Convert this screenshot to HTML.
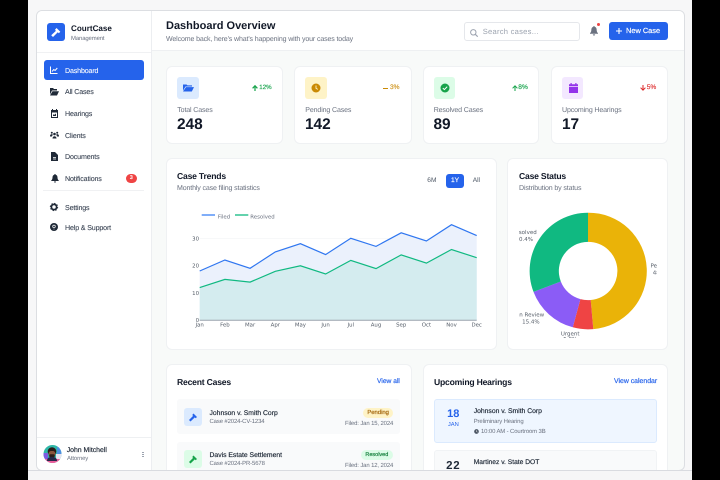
<!DOCTYPE html>
<html><head><meta charset="utf-8"><style>
html,body{margin:0;padding:0;width:720px;height:480px;overflow:hidden;background:#000}
*{box-sizing:border-box}
#r{position:absolute;left:0;top:0;width:720px;height:480px;overflow:hidden;background:#000;filter:blur(.28px);text-rendering:geometricPrecision}
#p{position:absolute;left:28px;top:0;width:664px;height:480px;background:#f7f7f8}
#f{position:absolute;left:36px;top:10px;width:649px;height:461px;background:#f8faf9;border:1px solid #dcdee2;border-radius:6px;overflow:hidden}
.a{position:absolute;white-space:nowrap;font-family:"Liberation Sans",sans-serif;line-height:12px;margin-top:.7px}
.b{position:absolute}
.c{position:absolute;background:#fff;border:1px solid #eff1f3;border-radius:6px}
.m{-webkit-text-stroke:.18px currentColor}
.nav{font-size:7.1px;letter-spacing:-.15px;color:#374151;left:65px;-webkit-text-stroke:.08px currentColor}
.h{font-size:8.600px;letter-spacing:-.2px;font-weight:bold;color:#111827}
.g{color:#6b7280}
.s{font-size:5.95px!important;letter-spacing:-.12px}
.lab{font-size:7.05px;letter-spacing:-.14px;color:#6b7280}
.num{font-size:15.4px;font-weight:bold;color:#111827;margin-top:0}
svg{position:absolute;overflow:visible}
svg text{font-family:"DejaVu Sans",sans-serif}
</style></head><body><div id="r">
<div id="p"></div>
<div id="f"></div>

<!-- sidebar -->
<div class="b" style="left:37px;top:11px;width:115px;height:459px;background:#fff;border-right:1px solid #eceef1;border-radius:5px 0 0 5px"></div>
<div class="b" style="left:37px;top:52px;width:114px;height:1px;background:#f0f1f3"></div>
<div class="b" style="left:47px;top:23px;width:18px;height:18px;border-radius:3px;background:#2563eb"></div>
<svg style="left:47px;top:23px" width="18" height="18" viewBox="0 0 18 18"><path d="M9.500 5l3.800 3.800-1.500 1.500-1-1L6 14 4.200 12.300 8.900 7.900l-.9-1.100z" fill="#fff"/></svg>
<div class="a" style="left:71px;top:22px;font-size:8.100px;font-weight:bold;color:#111827">CourtCase</div>
<div class="a s" style="left:71px;top:32px;color:#6b7280">Management</div>

<div class="b" style="left:43.500px;top:60.300px;width:100px;height:19.500px;border-radius:3px;background:#2563eb"></div>
<svg style="left:50px;top:66px" width="8" height="8" viewBox="0 0 8 8"><path d="M.5.500V7.500H7.500M2 5.500l1.800-2 1.300 1L7.300 2" fill="none" stroke="#fff" stroke-width="1"/></svg>
<div class="a nav" style="top:64px;color:#fff">Dashboard</div>
<svg style="left:50px;top:88px" width="9" height="8" viewBox="0 0 9 8"><path d="M0 0h3l1 1h3v1.500H2L0 6.500zM2.500 3.300H9L7 7.500H0z" fill="#1f2937"/></svg>
<div class="a nav" style="top:85.700px">All Cases</div>
<svg style="left:50.500px;top:109px" width="7" height="9" viewBox="0 0 7 9"><path d="M1 0h1v1h3V0h1v1h1v8H0V1h1zM1 3.500V8h5V3.500z" fill="#1f2937"/><path d="M2 5l1 1 2-1.500V7H2z" fill="#1f2937"/></svg>
<div class="a nav" style="top:107.300px">Hearings</div>
<svg style="left:50px;top:131px" width="9" height="8" viewBox="0 0 9 8" fill="#1f2937"><circle cx="4.500" cy="3" r="1.300"/><circle cx="1.800" cy="1.700" r="1"/><circle cx="7.200" cy="1.700" r="1"/><path d="M2.500 7.500c0-3 4-3 4 0zM0 5c0-2 2.200-2.200 2.800-1.500L2 5.500H0zM9 5c0-2-2.200-2.200-2.800-1.500L7 5.500h2z"/></svg>
<div class="a nav" style="top:129px">Clients</div>
<svg style="left:51px;top:152px" width="7" height="9" viewBox="0 0 7 9"><path d="M0 0h4l3 3v6H0z" fill="#1f2937"/><path d="M2 5h3v.8H2zM2 6.600h3v.8H2z" fill="#fff"/></svg>
<div class="a nav" style="top:150.700px">Documents</div>
<svg style="left:50.500px;top:174px" width="8" height="9" viewBox="0 0 8 9"><path d="M4 0c.5 0 .6.300.6.700C6 1 6.500 2.200 6.500 3.500c0 1.500.5 2.300 1.300 3V7H.2v-.5C1 5.800 1.500 5 1.500 3.500 1.500 2.200 2 1 3.400.7 3.400.3 3.500 0 4 0zM3 7.500h2C5 9 3 9 3 7.500z" fill="#1f2937"/></svg>
<div class="a nav" style="top:172.300px">Notifications</div>
<div class="b" style="left:126px;top:173.800px;width:10.700px;height:9px;border-radius:4.500px;background:#ef4444"></div>
<div class="a" style="left:126px;top:171.800px;width:10.700px;text-align:center;font-size:5.600px;font-weight:bold;color:#fff">3</div>
<div class="b" style="left:43px;top:190px;width:101px;height:1px;background:#f0f1f3"></div>
<svg style="left:50px;top:203px" width="8" height="8" viewBox="0 0 8 8"><circle cx="4" cy="4" r="2.600" fill="none" stroke="#1f2937" stroke-width="1.700"/><circle cx="4" cy="4" r="3.700" fill="none" stroke="#1f2937" stroke-width=".9" stroke-dasharray="1.500 1.400"/></svg>
<div class="a nav" style="top:201.300px">Settings</div>
<svg style="left:50px;top:223px" width="8" height="8" viewBox="0 0 8 8"><circle cx="4" cy="4" r="4" fill="#1f2937"/><circle cx="4" cy="3.400" r="1.300" fill="none" stroke="#fff" stroke-width=".7"/><rect x="3.600" y="5.600" width=".8" height=".8" fill="#fff"/></svg>
<div class="a nav" style="top:221.300px">Help &amp; Support</div>

<div class="b" style="left:37px;top:437px;width:114px;height:1px;background:#eef0f2"></div>
<svg style="left:43px;top:445px" width="19" height="19" viewBox="0 0 19 19"><defs><clipPath id="av"><circle cx="9.500" cy="9" r="9"/></clipPath></defs><g clip-path="url(#av)"><rect width="19" height="19" fill="#2fb7a8"/><rect x="0" y="8" width="5" height="8" fill="#7b5be0"/><rect x="14" y="2" width="5" height="7" fill="#4d8fe0"/><rect x="0" y="14" width="19" height="5" fill="#ee5c9c"/><rect x="13" y="9" width="6" height="5" fill="#e8e2f0"/><circle cx="9" cy="6.500" r="4.300" fill="#2a1b18"/><rect x="5.700" y="6" width="6.600" height="6" rx="2.500" fill="#8a543c"/><rect x="6.300" y="9.300" width="5.400" height="3.200" rx="1" fill="#2b1d1a"/><path d="M4 16c0-3 2-4 5-4s5 1 5 4z" fill="#26284a"/></g></svg>
<div class="a m" style="left:66.700px;top:444px;font-size:6.900px;color:#1f2937">John Mitchell</div>
<div class="a g s" style="left:67px;top:452.500px">Attorney</div>
<div class="b" style="left:142px;top:451.500px;width:1.500px;height:1.500px;background:#9ca3af"></div>
<div class="b" style="left:142px;top:453.500px;width:1.500px;height:1.500px;background:#9ca3af"></div>
<div class="b" style="left:142px;top:455.500px;width:1.500px;height:1.500px;background:#9ca3af"></div>

<!-- header -->
<div class="b" style="left:152px;top:11px;width:532px;height:40px;background:#fff;border-bottom:1px solid #eef0f2;border-radius:0 5px 0 0"></div>
<div class="a" style="left:166px;top:19.700px;font-size:11px;font-weight:bold;color:#111827">Dashboard Overview</div>
<div class="a g" style="left:166px;top:33.300px;font-size:7.050px;letter-spacing:-.14px">Welcome back, here's what's happening with your cases today</div>
<div class="b" style="left:464.300px;top:21.700px;width:115.500px;height:19px;background:#fff;border:1px solid #e5e7eb;border-radius:3px"></div>
<svg style="left:469.500px;top:28.500px" width="8" height="8" viewBox="0 0 8 8"><circle cx="3.300" cy="3.300" r="2.700" fill="none" stroke="#9ca3af" stroke-width="1"/><path d="M5.300 5.300L7.700 7.700" stroke="#9ca3af" stroke-width="1.100"/></svg>
<div class="a" style="left:482.700px;top:25px;font-size:7.600px;letter-spacing:.25px;color:#9ca3af">Search cases...</div>
<svg style="left:590px;top:26px" width="8" height="10" viewBox="0 0 9 11" preserveAspectRatio="none"><path d="M4.500 0c.6 0 .8.400.8.900C7 1.300 7.500 2.700 7.500 4.200c0 1.900.6 2.900 1.500 3.700V8.500H0v-.6C.9 7.100 1.500 6.100 1.500 4.200 1.500 2.700 2 1.300 3.700.9 3.700.4 3.900 0 4.500 0zM3.200 9.200h2.600c0 1.800-2.600 1.800-2.600 0z" fill="#6b7280"/></svg>
<div class="b" style="left:596.500px;top:23.200px;width:3px;height:3px;border-radius:50%;background:#ef4444"></div>
<div class="b" style="left:609px;top:22.300px;width:59.300px;height:17.700px;border-radius:3px;background:#2563eb"></div>
<svg style="left:616px;top:28px" width="6" height="6" viewBox="0 0 6 6"><path d="M3 0V6M0 3H6" stroke="#fff" stroke-width="1.100"/></svg>
<div class="a m" style="left:626px;top:24.500px;font-size:7.400px;color:#fff">New Case</div>

<!-- stat cards -->
<div class="c" style="left:165.700px;top:65.700px;width:117.700px;height:78.300px"></div>
<div class="c" style="left:294.300px;top:65.700px;width:117.400px;height:78.300px"></div>
<div class="c" style="left:422.700px;top:65.700px;width:116.700px;height:78.300px"></div>
<div class="c" style="left:550.700px;top:65.700px;width:117.600px;height:78.300px"></div>
<div class="b" style="left:177.300px;top:77px;width:21.500px;height:21.700px;border-radius:3px;background:#dbeafe"></div>
<svg style="left:182.700px;top:84px" width="11" height="8" viewBox="0 0 11 9" preserveAspectRatio="none"><path d="M0 .5h3.500l1 1H9v1.300H2.500L0 7.500zM3 3.500h8L8.800 8.500H0z" fill="#2563eb"/></svg>
<div class="b" style="left:305.300px;top:77px;width:21.700px;height:21.700px;border-radius:3px;background:#fef3c7"></div>
<svg style="left:311px;top:83px" width="10" height="10" viewBox="0 0 10 10"><circle cx="5" cy="5" r="4.500" fill="#ca8a04"/><path d="M5 2.500V5.300L6.800 6.400" fill="none" stroke="#fef3c7" stroke-width=".9"/></svg>
<div class="b" style="left:433.700px;top:77px;width:21.300px;height:21.700px;border-radius:3px;background:#dcfce7"></div>
<svg style="left:439.500px;top:83px" width="10" height="10" viewBox="0 0 10 10"><circle cx="5" cy="5" r="4.500" fill="#16a34a"/><path d="M2.800 5.100L4.400 6.600 7.200 3.700" fill="none" stroke="#fff" stroke-width="1"/></svg>
<div class="b" style="left:562px;top:77px;width:21.300px;height:21.700px;border-radius:3px;background:#f3e8ff"></div>
<svg style="left:568.500px;top:83px" width="9" height="10" viewBox="0 0 9 10"><path d="M1.500 0h1.200v1.200h3.600V0h1.200v1.200H9V3H0V1.200h1.500zM0 3.700h9V10H0z" fill="#9333ea"/></svg>

<svg style="left:252.300px;top:84.500px" width="6" height="6" viewBox="0 0 6 6"><path d="M3 6V1M.6 3.300L3 .8 5.400 3.300" fill="none" stroke="#16a34a" stroke-width="1.200"/></svg>
<div class="a m" style="left:259.300px;top:81px;font-size:6.200px;color:#22a855">12%</div>
<div class="b" style="left:383px;top:87.500px;width:5px;height:1px;background:#ca8a04"></div>
<div class="a m" style="left:390px;top:81px;font-size:6.600px;color:#d19a2a">3%</div>
<svg style="left:511.700px;top:84.500px" width="6" height="6" viewBox="0 0 6 6"><path d="M3 6V1M.6 3.300L3 .8 5.400 3.300" fill="none" stroke="#16a34a" stroke-width="1"/></svg>
<div class="a m" style="left:518.300px;top:81px;font-size:6.600px;color:#22a855">8%</div>
<svg style="left:640px;top:84.500px" width="6" height="6" viewBox="0 0 6 6"><path d="M3 0V5M.6 2.700L3 5.200 5.400 2.700" fill="none" stroke="#dc2626" stroke-width="1"/></svg>
<div class="a m" style="left:646.700px;top:81px;font-size:6.600px;color:#e0393a">5%</div>

<div class="a lab" style="left:177.300px;top:104px">Total Cases</div>
<div class="a num" style="left:177px;top:119px">248</div>
<div class="a lab" style="left:305.300px;top:104px">Pending Cases</div>
<div class="a num" style="left:305px;top:119px">142</div>
<div class="a lab" style="left:433.700px;top:104px">Resolved Cases</div>
<div class="a num" style="left:433.500px;top:119px">89</div>
<div class="a lab" style="left:562px;top:104px">Upcoming Hearings</div>
<div class="a num" style="left:562px;top:119px">17</div>

<!-- Case trends -->
<div class="c" style="left:166px;top:158px;width:331px;height:192px"></div>
<div class="a h" style="left:177px;top:169.500px">Case Trends</div>
<div class="a lab" style="left:177px;top:182.700px">Monthly case filing statistics</div>
<div class="a" style="left:427.300px;top:174.700px;font-size:6.600px;color:#4b5563">6M</div>
<div class="b" style="left:446.300px;top:174.300px;width:17.400px;height:14px;border-radius:3px;background:#2563eb"></div>
<div class="a m" style="left:446.300px;top:174.700px;width:17.400px;text-align:center;font-size:6.600px;color:#fff">1Y</div>
<div class="a" style="left:472.700px;top:174.700px;font-size:6.600px;color:#4b5563">All</div>
<svg style="left:0;top:0" width="720" height="480">
<path d="M199.700 238.500H476.700" stroke="#f5f6f7" stroke-width=".7"/>
<path d="M199.700 271L224.900 260 250.100 268.300 275.300 251.900 300.400 243.700 325.600 254.600 350.800 238.300 376 246.400 401.200 232.800 426.400 241 451.500 224.700 476.700 235.600V320.300H199.700z" fill="#ebf1fc"/>
<path d="M199.700 287.600L224.900 279.400 250.100 282.100 275.300 271.300 300.400 265.800 325.600 274 350.800 260.400 376 268.600 401.200 254.900 426.400 263.100 451.500 249.500 476.700 257.700V320.300H199.700z" fill="#d4ecef"/>
<path d="M199.700 271L224.900 260 250.100 268.300 275.300 251.900 300.400 243.700 325.600 254.600 350.800 238.300 376 246.400 401.200 232.800 426.400 241 451.500 224.700 476.700 235.600" fill="none" stroke="#2f76f0" stroke-width="1.200"/>
<path d="M199.700 287.600L224.900 279.400 250.100 282.100 275.300 271.300 300.400 265.800 325.600 274 350.800 260.400 376 268.600 401.200 254.900 426.400 263.100 451.500 249.500 476.700 257.700" fill="none" stroke="#10b981" stroke-width="1.200"/>
<path d="M199.700 320.300H476.700" stroke="#9aa3ad" stroke-width="1"/>
<path d="M201.700 215H215" stroke="#3b82f6" stroke-width="1.300"/>
<path d="M235 215H248.300" stroke="#10b981" stroke-width="1.300"/>
<g font-size="5.400" fill="#555d68">
<text x="217.700" y="218.300" fill="#6b7280">Filed</text><text x="250.300" y="218.300" fill="#6b7280">Resolved</text>
<g text-anchor="end"><text x="199" y="240.300">30</text><text x="199" y="267.500">20</text><text x="199" y="295">10</text><text x="199" y="322">0</text></g>
<g text-anchor="middle"><text x="199.700" y="326.700">Jan</text><text x="224.900" y="326.700">Feb</text><text x="250.100" y="326.700">Mar</text><text x="275.300" y="326.700">Apr</text><text x="300.400" y="326.700">May</text><text x="325.600" y="326.700">Jun</text><text x="350.800" y="326.700">Jul</text><text x="376" y="326.700">Aug</text><text x="401.200" y="326.700">Sep</text><text x="426.400" y="326.700">Oct</text><text x="451.500" y="326.700">Nov</text><text x="476.700" y="326.700">Dec</text></g>
</g>
</svg>

<!-- Case status -->
<div class="c" style="left:507px;top:158px;width:161px;height:192px"></div>
<div class="a h" style="left:519px;top:169.500px">Case Status</div>
<div class="a lab" style="left:519px;top:182.700px">Distribution by status</div>
<div class="b" style="left:519px;top:200px;width:138px;height:138.300px;overflow:hidden">
<svg style="left:-519px;top:-200px" width="720" height="480">
<path d="M588 212.700A58.300 58.300 0 0 1 593.300 329.100L590.700 300A29.100 29.100 0 0 0 588 241.900z" fill="#eab308"/>
<path d="M593.300 329.100A58.300 58.300 0 0 1 572.800 327.300L580.400 299.100A29.100 29.100 0 0 0 590.700 300z" fill="#ef4444"/>
<path d="M572.800 327.300A58.300 58.300 0 0 1 533.500 291.900L560.800 281.500A29.100 29.100 0 0 0 580.400 299.100z" fill="#8b5cf6"/>
<path d="M533.500 291.900A58.300 58.300 0 0 1 588 212.700V241.900A29.100 29.100 0 0 0 560.800 281.500z" fill="#10b981"/>
<g font-size="5.500" fill="#555d68" text-anchor="middle">
<text x="524.300" y="234">Resolved</text><text x="524.300" y="241">30.4%</text>
<text x="530.900" y="316.300">In Review</text><text x="530.900" y="323.700">15.4%</text>
<text x="570.200" y="335.300">Urgent</text><text x="570.200" y="341.200">5.8%</text>
<text x="661.500" y="267.300">Pending</text><text x="661.500" y="274.300">48.4%</text>
</g></svg></div>

<!-- Recent cases -->
<div class="c" style="left:166px;top:364px;width:246px;height:120px"></div>
<div class="a h" style="left:177px;top:375.500px">Recent Cases</div>
<div class="a m" style="left:377px;top:375.500px;font-size:6.700px;color:#2563eb">View all</div>
<div class="b" style="left:177.300px;top:399.300px;width:222.700px;height:34.700px;border-radius:3px;background:#f9fafb"></div>
<div class="b" style="left:184.300px;top:407.700px;width:18px;height:18px;border-radius:3px;background:#dbeafe"></div>
<svg style="left:184.300px;top:407.700px" width="18" height="18" viewBox="0 0 18 18"><path d="M9.500 5.500l3.500 3.500-1.300 1.300-.9-.9L6.500 13.500 5 12 9.100 7.900l-.9-.9z" fill="#2563eb"/></svg>
<div class="a m" style="left:209.500px;top:407.300px;font-size:6.800px;color:#1f2937">Johnson v. Smith Corp</div>
<div class="a g s" style="left:209.500px;top:415px">Case #2024-CV-1234</div>
<div class="b" style="left:363.300px;top:407.700px;width:29.700px;height:10px;border-radius:5px;background:#fef3c7"></div>
<div class="a m" style="left:363.300px;top:406.400px;width:29.700px;text-align:center;font-size:5.900px;color:#a16207">Pending</div>
<div class="a g s" style="left:345px;top:417.300px">Filed: Jan 15, 2024</div>
<div class="b" style="left:177.300px;top:441.700px;width:222.700px;height:34.700px;border-radius:3px;background:#f9fafb"></div>
<div class="b" style="left:184.300px;top:450px;width:18px;height:18px;border-radius:3px;background:#dcfce7"></div>
<svg style="left:184.300px;top:450px" width="18" height="18" viewBox="0 0 18 18"><path d="M9.500 5.500l3.500 3.500-1.300 1.300-.9-.9L6.500 13.500 5 12 9.100 7.900l-.9-.9z" fill="#16a34a"/></svg>
<div class="a m" style="left:209.500px;top:449.300px;font-size:6.800px;color:#1f2937">Davis Estate Settlement</div>
<div class="a g s" style="left:209.500px;top:457px">Case #2024-PR-5678</div>
<div class="b" style="left:360.700px;top:449.700px;width:32.300px;height:10px;border-radius:5px;background:#dcfce7"></div>
<div class="a m" style="left:360.700px;top:448.400px;width:32.300px;text-align:center;font-size:5.500px;color:#15803d">Resolved</div>
<div class="a g s" style="left:345px;top:459.700px">Filed: Jan 12, 2024</div>

<!-- Upcoming -->
<div class="c" style="left:422.700px;top:364px;width:245.600px;height:120px"></div>
<div class="a h" style="left:434px;top:375.500px">Upcoming Hearings</div>
<div class="a m" style="left:614px;top:375.500px;font-size:6.900px;color:#2563eb">View calendar</div>
<div class="b" style="left:433.700px;top:399.300px;width:223px;height:43.700px;border-radius:3px;background:#eff6ff;border:1px solid #dbeafe"></div>
<div class="a" style="left:439.300px;top:407.500px;width:28px;text-align:center;font-size:11px;font-weight:bold;color:#2563eb">18</div>
<div class="a" style="left:439.300px;top:418.200px;width:28px;text-align:center;font-size:5.800px;color:#2563eb">JAN</div>
<div class="a m" style="left:473.700px;top:405.300px;font-size:6.800px;color:#1f2937">Johnson v. Smith Corp</div>
<div class="a g s" style="left:473.700px;top:415.300px">Preliminary Hearing</div>
<svg style="left:474px;top:429.300px" width="5" height="5" viewBox="0 0 6 6"><circle cx="3" cy="3" r="2.800" fill="#4b5563"/><path d="M3 1.500V3.200L4.200 3.800" fill="none" stroke="#fff" stroke-width=".6"/></svg>
<div class="a g s" style="left:481px;top:425.700px">10:00 AM - Courtroom 3B</div>
<div class="b" style="left:433.700px;top:450.300px;width:223px;height:34px;border-radius:3px;background:#f9fafb;border:1px solid #f1f3f5"></div>
<div class="a" style="left:439.300px;top:459.200px;width:28px;text-align:center;font-size:11.500px;letter-spacing:.8px;font-weight:bold;color:#1f2937">22</div>
<div class="a m" style="left:473.700px;top:456.700px;font-size:6.700px;color:#1f2937">Martinez v. State DOT</div>

<!-- bottom crop of frame -->
<div class="b" style="left:28px;top:470px;width:664px;height:10px;background:#f6f6f7;border-top:1px solid #d9dbe0"></div>
<div class="b" style="left:0;top:0;width:28px;height:480px;background:#000"></div>
<div class="b" style="left:692px;top:0;width:28px;height:480px;background:#000"></div>
</div></body></html>
